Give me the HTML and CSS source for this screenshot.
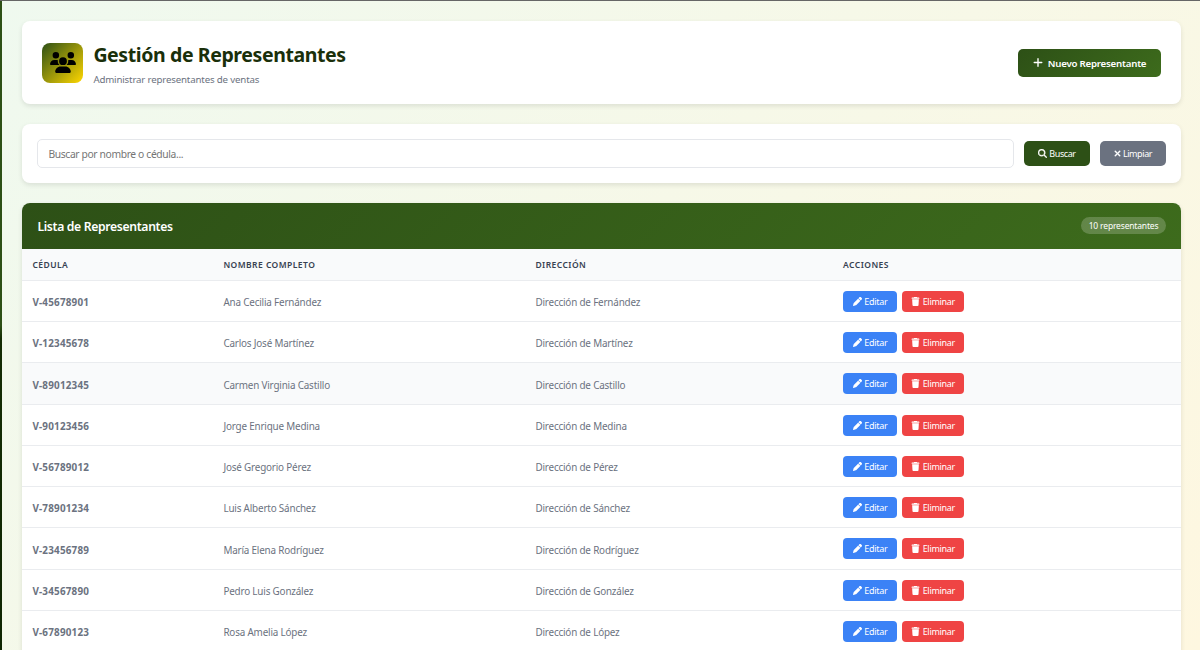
FILE: index.html
```html
<!DOCTYPE html>
<html lang="es">
<head>
<meta charset="utf-8">
<title>Gestión de Representantes</title>
<link rel="stylesheet" href="styles.css">
</head>
<body>
<svg class="sprite" aria-hidden="true">
  <symbol id="users" viewBox="0 0 640 512"><path d="M144 0a80 80 0 1 1 0 160A80 80 0 1 1 144 0zM512 0a80 80 0 1 1 0 160A80 80 0 1 1 512 0zM0 298.700C0 239.800 47.800 192 106.700 192h42.700c15.900 0 31 3.500 44.600 9.700-1.300 7.200-1.900 14.700-1.900 22.300 0 38.200 16.800 72.500 43.300 96H21.300C9.600 320 0 310.400 0 298.700zM405.300 320h-.7c26.600-23.500 43.300-57.800 43.300-96 0-7.600-.7-15-1.900-22.300 13.600-6.300 28.700-9.700 44.600-9.700h42.700C592.200 192 640 239.800 640 298.700c0 11.800-9.600 21.300-21.300 21.300zM224 224a96 96 0 1 1 192 0 96 96 0 1 1-192 0zM128 485.300C128 411.700 187.700 352 261.300 352h117.400C452.300 352 512 411.700 512 485.300c0 14.700-11.900 26.700-26.700 26.700H154.700c-14.700 0-26.700-11.900-26.700-26.700z"/></symbol>
  <symbol id="plus" viewBox="0 0 448 512"><path d="M256 80c0-17.700-14.300-32-32-32s-32 14.300-32 32v144H48c-17.700 0-32 14.300-32 32s14.300 32 32 32h144v144c0 17.700 14.300 32 32 32s32-14.300 32-32V288h144c17.700 0 32-14.300 32-32s-14.300-32-32-32H256z"/></symbol>
  <symbol id="search" viewBox="0 0 512 512"><path d="M416 208c0 45.900-14.900 88.300-40 122.700l126.600 126.700c12.500 12.500 12.500 32.800 0 45.300s-32.800 12.500-45.300 0L330.700 376c-34.400 25.200-76.800 40-122.700 40C93.100 416 0 322.900 0 208S93.100 0 208 0s208 93.100 208 208zM208 352a144 144 0 1 0 0-288 144 144 0 1 0 0 288z"/></symbol>
  <symbol id="times" viewBox="0 0 384 512"><path d="M342.600 150.600c12.500-12.500 12.500-32.800 0-45.300s-32.800-12.500-45.300 0L192 210.700 86.600 105.400c-12.500-12.500-32.800-12.500-45.300 0s-12.500 32.800 0 45.300L146.700 256 41.400 361.400c-12.500 12.500-12.500 32.800 0 45.300s32.800 12.500 45.300 0L192 301.300l105.400 105.300c12.500 12.500 32.800 12.500 45.300 0s12.500-32.800 0-45.300L237.300 256z"/></symbol>
  <symbol id="pencil" viewBox="0 0 512 512"><path d="M410.300 231l11.300-11.300-33.900-33.900-62.100-62.100-33.900-33.900-11.300 11.300-22.600 22.600L58.600 322.900c-10.400 10.400-18 23.300-22.200 37.400L1 480.700c-2.500 8.400-.2 17.500 6.100 23.700s15.300 8.500 23.700 6.100l120.300-35.400c14.100-4.200 27-11.800 37.400-22.200l199.200-199.200zM362.700 18.700l-48.400 48.400 130.600 130.600 48.400-48.400c25-25 25-65.500 0-90.500l-40.100-40.100c-25-25-65.500-25-90.500 0z"/></symbol>
  <symbol id="trash" viewBox="0 0 448 512"><path d="M135.200 17.700L128 32H32C14.300 32 0 46.300 0 64s14.300 32 32 32h384c17.700 0 32-14.300 32-32s-14.300-32-32-32h-96l-7.200-14.300C307.400 6.800 296.300 0 284.200 0H163.800c-12.100 0-23.200 6.800-28.600 17.700zM416 128H32l21.200 339c1.600 25.300 22.600 45 47.900 45h245.800c25.300 0 46.300-19.700 47.900-45z"/></symbol>
</svg>
<div class="app">
  <div class="sidebar-edge"></div>
  <main class="content">
    <header class="card page-header">
      <div class="logo"><svg><use href="#users"/></svg></div>
      <div class="titles">
        <h1>Gestión de Representantes</h1>
        <p>Administrar representantes de ventas</p>
      </div>
      <button class="btn-new"><svg><use href="#plus"/></svg><span>Nuevo Representante</span></button>
    </header>
    <form class="card search">
      <input type="text" placeholder="Buscar por nombre o cédula...">
      <button type="button" class="btn-search"><svg><use href="#search"/></svg>Buscar</button>
      <button type="button" class="btn-search clear"><svg><use href="#times"/></svg>Limpiar</button>
    </form>
    <section class="card list">
      <div class="list-head"><h2>Lista de Representantes</h2><span class="badge">10 representantes</span></div>
      <div class="row head"><span>CÉDULA</span><span>NOMBRE COMPLETO</span><span>DIRECCIÓN</span><span>ACCIONES</span></div>
      <div class="row"><b>V-45678901</b><span>Ana Cecilia Fernández</span><span>Dirección de Fernández</span><div class="actions"><button class="edit"><svg><use href="#pencil"/></svg>Editar</button><button class="delete"><svg><use href="#trash"/></svg>Eliminar</button></div></div>
      <div class="row"><b>V-12345678</b><span>Carlos José Martínez</span><span>Dirección de Martínez</span><div class="actions"><button class="edit"><svg><use href="#pencil"/></svg>Editar</button><button class="delete"><svg><use href="#trash"/></svg>Eliminar</button></div></div>
      <div class="row hovered"><b>V-89012345</b><span>Carmen Virginia Castillo</span><span>Dirección de Castillo</span><div class="actions"><button class="edit"><svg><use href="#pencil"/></svg>Editar</button><button class="delete"><svg><use href="#trash"/></svg>Eliminar</button></div></div>
      <div class="row"><b>V-90123456</b><span>Jorge Enrique Medina</span><span>Dirección de Medina</span><div class="actions"><button class="edit"><svg><use href="#pencil"/></svg>Editar</button><button class="delete"><svg><use href="#trash"/></svg>Eliminar</button></div></div>
      <div class="row"><b>V-56789012</b><span>José Gregorio Pérez</span><span>Dirección de Pérez</span><div class="actions"><button class="edit"><svg><use href="#pencil"/></svg>Editar</button><button class="delete"><svg><use href="#trash"/></svg>Eliminar</button></div></div>
      <div class="row"><b>V-78901234</b><span>Luis Alberto Sánchez</span><span>Dirección de Sánchez</span><div class="actions"><button class="edit"><svg><use href="#pencil"/></svg>Editar</button><button class="delete"><svg><use href="#trash"/></svg>Eliminar</button></div></div>
      <div class="row"><b>V-23456789</b><span>María Elena Rodríguez</span><span>Dirección de Rodríguez</span><div class="actions"><button class="edit"><svg><use href="#pencil"/></svg>Editar</button><button class="delete"><svg><use href="#trash"/></svg>Eliminar</button></div></div>
      <div class="row"><b>V-34567890</b><span>Pedro Luis González</span><span>Dirección de González</span><div class="actions"><button class="edit"><svg><use href="#pencil"/></svg>Editar</button><button class="delete"><svg><use href="#trash"/></svg>Eliminar</button></div></div>
      <div class="row"><b>V-67890123</b><span>Rosa Amelia López</span><span>Dirección de López</span><div class="actions"><button class="edit"><svg><use href="#pencil"/></svg>Editar</button><button class="delete"><svg><use href="#trash"/></svg>Eliminar</button></div></div>
    </section>
  </main>
</div>
</body>
</html>
```

FILE: styles.css
```css
* { box-sizing: border-box; }
body { margin: 0; height: 650px; overflow: hidden; font-family: "Noto Sans", "Open Sans", sans-serif; }
h1, h2, p { margin: 0; }
svg { fill: currentColor; flex: none; }
.sprite { display: none; }
button { border: 0; font-family: inherit; color: #fff; display: flex; align-items: center; justify-content: center; white-space: nowrap; padding: 0; }

.app { display: flex; height: 650px; border-top: 1px solid #666; background: linear-gradient(135deg, #eff9ef 0%, #fef7e0 100%); }
.sidebar-edge { width: 2px; flex: none; background: linear-gradient(180deg, #2d5016 0%, #2d5016 50%, #142d04 52%, #0f2602 100%); }
.content { flex: 1; display: flex; flex-direction: column; gap: 20px; padding: 20px 19px 0 20.400px; }
.card { background: #fff; border-radius: 8px; box-shadow: 0 2px 5px rgba(0, 0, 0, .1); flex: none; }

.page-header { height: 83.300px; display: flex; align-items: center; padding: 0 20px; }
.logo { width: 41px; height: 40px; border-radius: 8px; background: linear-gradient(135deg, #2d5016, #ffd700); display: flex; align-items: center; justify-content: center; color: #000; }
.logo svg { width: 26px; height: 21px; }
.titles { margin-left: 10px; padding-top: 2px; flex: 1; }
h1 { font-size: 19.500px; line-height: 28px; font-weight: 700; color: #1a2f0a; letter-spacing: -.4px; }
.titles p { font-size: 9.700px; line-height: 15px; margin-top: 3px; color: #6b7280; letter-spacing: -.16px; }
.btn-new { width: 143px; height: 28px; border-radius: 5px; background: linear-gradient(135deg, #2d5016, #3d6b1c); font-size: 9.700px; font-weight: 600; letter-spacing: -.22px; gap: 5px; }
.btn-new span { padding-top: 1px; }
.btn-new svg { width: 10px; height: 11px; }

.search { height: 58.500px; display: flex; align-items: center; gap: 10px; padding: 0 15px; }
.search input { flex: 1; height: 29px; border: 1px solid #e5e7eb; border-radius: 5px; padding: 0 10px; font: 10.300px "Noto Sans", sans-serif; letter-spacing: -.36px; outline: 0; }
.search input::placeholder { color: #757575; }
.btn-search { width: 66px; height: 24.500px; border-radius: 5px; background: #2d5016; font-size: 9px; letter-spacing: -.42px; gap: 2px; }
.btn-search svg { width: 9px; height: 9px; stroke: currentColor; stroke-width: 18px; }
.clear { background: #6b7280; }
.clear svg { width: 7px; }

.list { height: 460px; overflow: hidden; }
.list-head { height: 45.900px; display: flex; align-items: center; justify-content: space-between; padding: 0 15px; background: linear-gradient(135deg, #2d5016, #3d6b1c); color: #fff; }
h2 { font-size: 12.200px; font-weight: 600; letter-spacing: -.33px; padding-top: 2px; }
.badge { width: 85px; height: 17px; border-radius: 9px; background: rgba(255, 255, 255, .2); font-size: 8.500px; line-height: 17px; text-align: center; letter-spacing: -.17px; }
.row { display: grid; grid-template-columns: 191px 312px 307.700px 1fr; align-items: center; height: 41.250px; padding: 2px 10px 0; border-bottom: 1px solid #eaecef; font-size: 9.900px; color: #6b7280; letter-spacing: -.18px; }
.row b { font-weight: 700; letter-spacing: .2px; }
.row.head { height: 32.200px; padding-top: 0; background: #f9fafb; color: #374151; font-size: 8.500px; font-weight: 600; letter-spacing: .45px; }
.hovered { background: #f9fafb; }
.actions { display: flex; gap: 5px; margin-top: -1.500px; }
.actions button { height: 21px; border-radius: 4px; font-size: 9px; letter-spacing: -.3px; gap: 2.500px; }
.actions svg { width: 9px; height: 9px; }
.edit { width: 54px; background: #3b82f6; }
.delete { width: 62px; background: #ef4444; }
```
